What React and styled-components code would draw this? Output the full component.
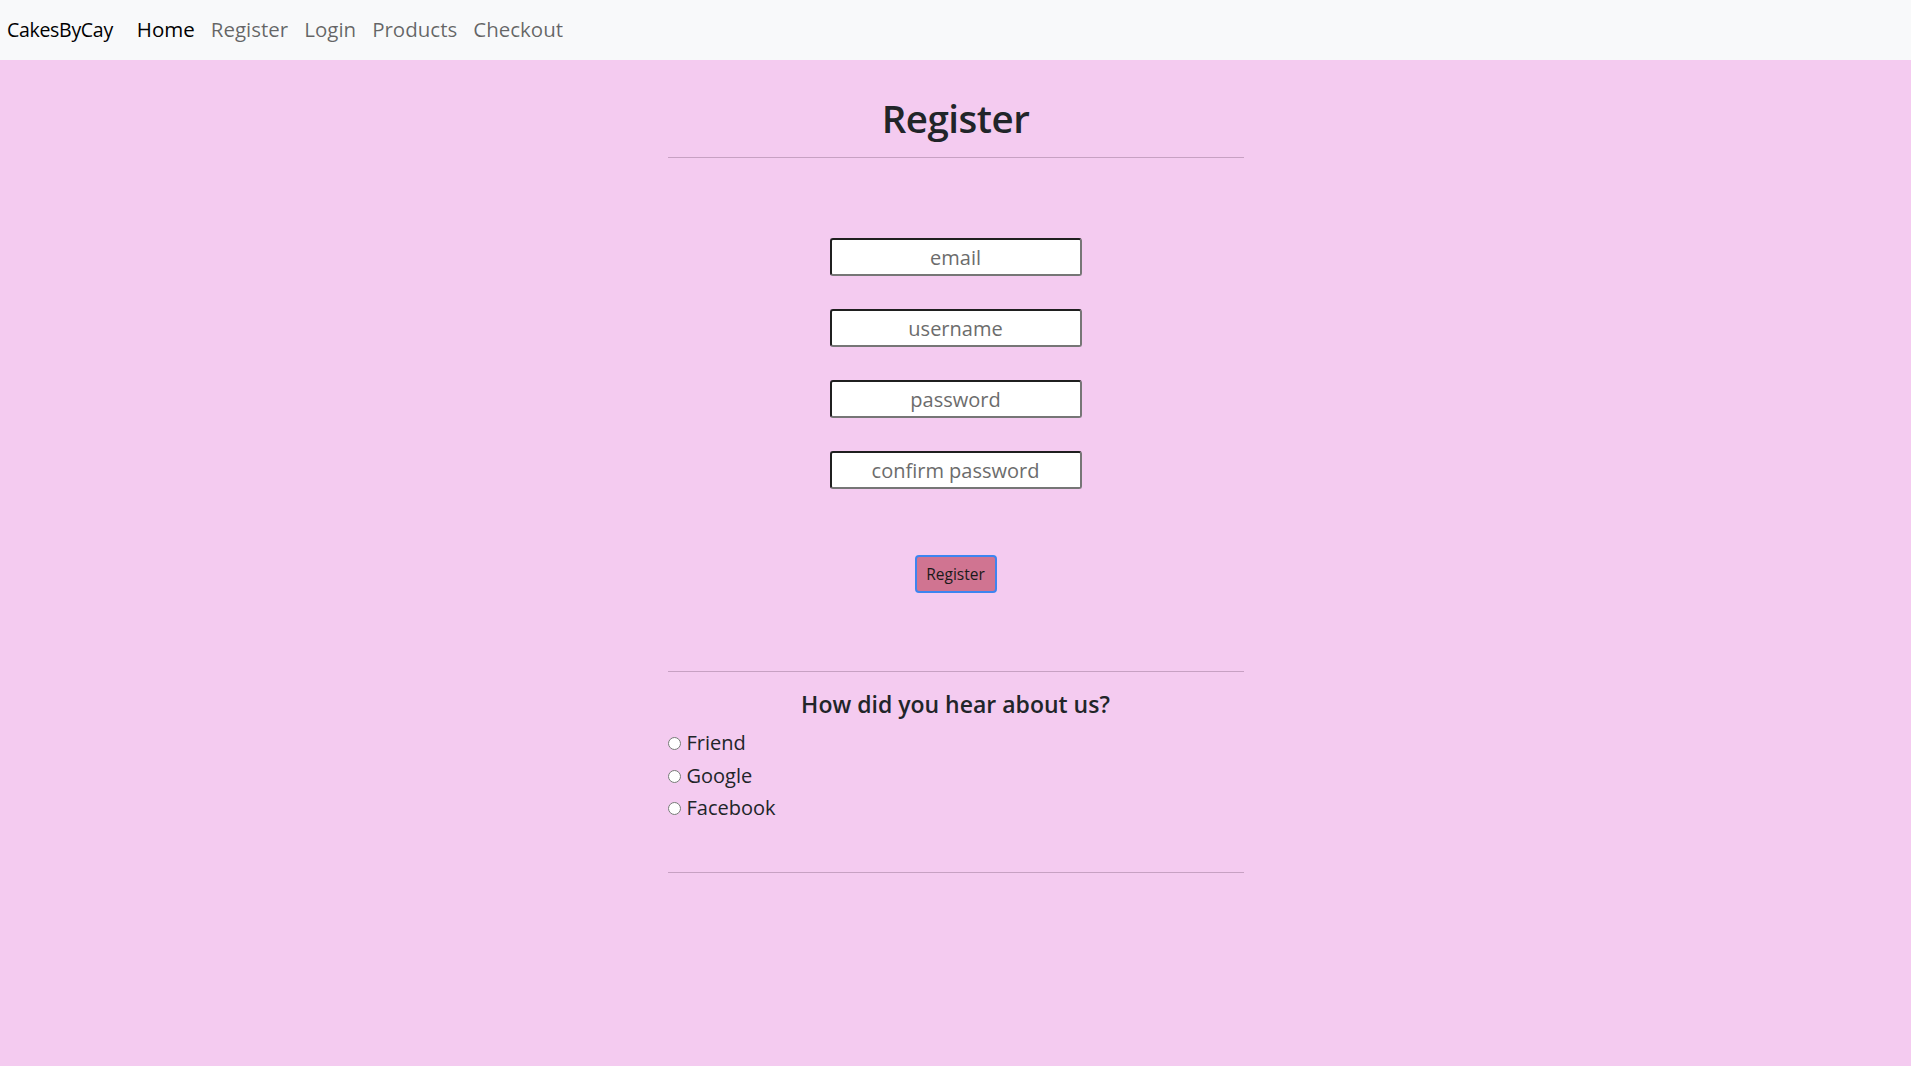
import React from 'react';
import styled, { createGlobalStyle } from 'styled-components';

const GlobalStyle = createGlobalStyle`
  body {
    margin: 0;
    background-color: #f4cbf0;
    font-family: "Open Sans", "Noto Sans", sans-serif;
    color: #212529;
  }
`;

const Navbar = styled.nav`
  height: 60px;
  background-color: #f8f9fa;
  display: flex;
  align-items: center;
  padding: 0 7px 2px;
  box-sizing: border-box;
`;

const Brand = styled.a`
  font-size: 19.5px;
  color: #000;
  margin-right: 16px;
  text-decoration: none;
  letter-spacing: -0.3px;
`;

const NavLink = styled.a`
  font-size: 20.5px;
  padding: 0 8px;
  color: ${(props) => (props.active ? '#000' : 'rgba(0, 0, 0, 0.6)')};
  text-decoration: none;
`;

const Main = styled.main`
  width: 576px;
  margin: 0 auto;
  display: flex;
  flex-direction: column;
`;

const Title = styled.h1`
  margin: 35px 0 0;
  font-size: 38.5px;
  font-weight: 600;
  line-height: 1.2;
  text-align: center;
  letter-spacing: -0.5px;
`;

const Rule = styled.hr`
  margin: ${(props) => props.margin || '0'};
  border: 0;
  border-top: 1px solid #c7a1c3;
  width: 100%;
`;

const Form = styled.form`
  display: flex;
  flex-direction: column;
  align-items: center;
  gap: 33px;
  margin-top: 80px;
`;

const Input = styled.input`
  box-sizing: border-box;
  width: 252px;
  height: 38px;
  border-width: 2px;
  border-style: solid;
  border-color: #1f1f1f #767676 #767676 #1f1f1f;
  border-radius: 3px;
  background: #fff;
  text-align: center;
  font-family: "Open Sans", sans-serif;
  font-size: 20px;

  &::placeholder {
    color: #6c6c6c;
  }
`;

const Button = styled.button`
  box-sizing: border-box;
  margin-top: 33px;
  width: 82px;
  height: 38px;
  background-color: #d07491;
  border: 2px solid #3d84f0;
  border-radius: 4px;
  font-family: "Open Sans", sans-serif;
  font-size: 15.5px;
  color: #1a1a1a;
`;

const Survey = styled.section`
  margin-top: 78px;
  display: flex;
  flex-direction: column;
`;

const Question = styled.h4`
  margin: 18.5px 0 8px;
  font-size: 23px;
  font-weight: 600;
  line-height: 1.2;
  text-align: center;
`;

const Option = styled.label`
  display: flex;
  align-items: center;
  height: 32.5px;
  font-size: 20px;
`;

const Radio = styled.input`
  width: 13px;
  height: 13px;
  margin: 2px 6px 0 0;
`;

const options = ['Friend', 'Google', 'Facebook'];

export default function App() {
  return (
    <>
      <GlobalStyle />
      <Navbar>
        <Brand href="#">CakesByCay</Brand>
        <NavLink href="#" active>Home</NavLink>
        <NavLink href="#">Register</NavLink>
        <NavLink href="#">Login</NavLink>
        <NavLink href="#">Products</NavLink>
        <NavLink href="#">Checkout</NavLink>
      </Navbar>
      <Main>
        <Title>Register</Title>
        <Rule margin="16px 0 0" />
        <Form onSubmit={(e) => e.preventDefault()}>
          <Input type="email" placeholder="email" />
          <Input type="text" placeholder="username" />
          <Input type="password" placeholder="password" />
          <Input type="password" placeholder="confirm password" />
          <Button type="submit">Register</Button>
        </Form>
        <Survey>
          <Rule />
          <Question>How did you hear about us?</Question>
          {options.map((opt) => (
            <Option key={opt}>
              <Radio type="radio" name="source" value={opt} />
              {opt}
            </Option>
          ))}
          <Rule margin="48.5px 0 0" />
        </Survey>
      </Main>
    </>
  );
}
